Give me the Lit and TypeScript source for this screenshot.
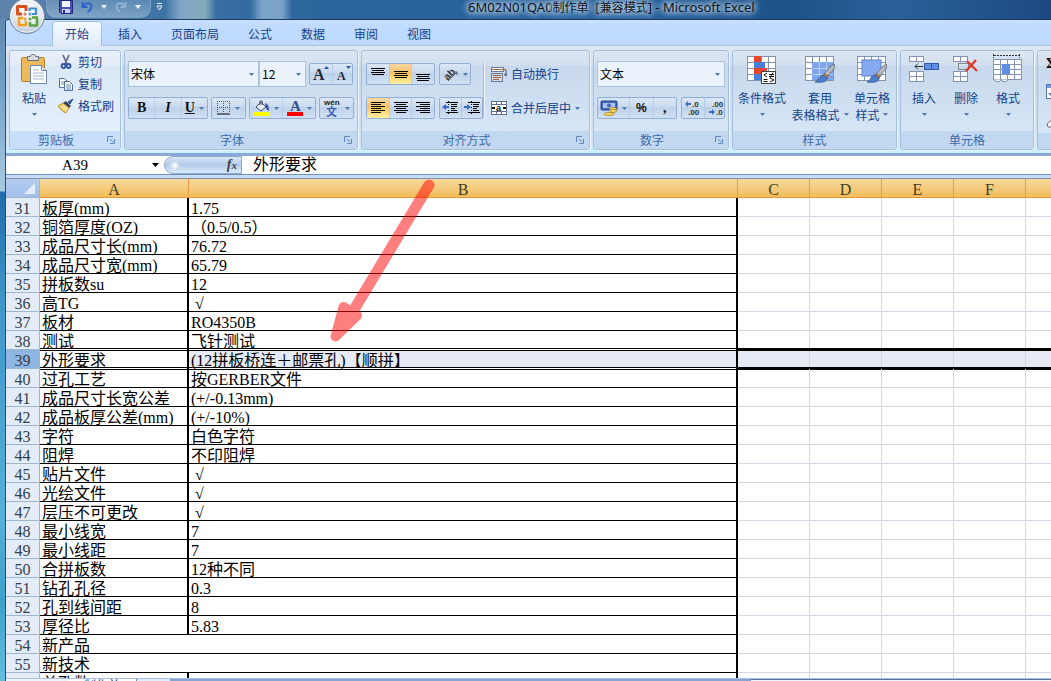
import { LitElement, html, svg, css, nothing, TemplateResult } from "lit";
import { customElement, property } from "lit/decorators.js";
import { classMap } from "lit/directives/class-map.js";

/* ---------- icons ---------- */

const icon = (w: number, h: number, body: unknown) =>
  html`<svg width=${w} height=${h} viewBox="0 0 ${w} ${h}" aria-hidden="true">${body}</svg>`;

const caret = html`<svg class="caret" width="5" height="3" viewBox="0 0 5 3" aria-hidden="true"><path d="M0 0h5L2.5 3z" fill="#4f78ad" /></svg>`;

const lines = (rows: number[][]) => svg`${rows.map(
  ([x, y, w]) => svg`<rect x=${x} y=${y} width=${w} height="1" fill="#000"/>`
)}`;

const cells = (x: number, y: number, cols: number, rows: number, cw: number, ch: number) => {
  const out: unknown[] = [];
  for (let r = 0; r < rows; r++)
    for (let c = 0; c < cols; c++)
      out.push(svg`<rect x=${x + c * cw + 0.5} y=${y + r * ch + 0.5} width=${cw} height=${ch} fill="#fff" stroke="#8494b0" stroke-width="1"/>`);
  return svg`${out}`;
};

const brush = (x: number, y: number) => svg`<g transform="translate(${x} ${y})">
  <path d="M19 0l1 1-1 4-6 7-4-2 6-7z" fill="#b5b9c2" stroke="#5b6272" stroke-width=".8"/>
  <path d="M9 10l4 2-1 3-4-3z" fill="#c58a3f" stroke="#7d5420" stroke-width=".6"/>
  <path d="M8 11l4 3c0 4-5 5-12 4 4-1 3-6 8-7z" fill="#4c7fcb" stroke="#2a4f8e" stroke-width=".7"/>
</g>`;

const I = {
  office: icon(36, 36, svg`
    <defs>
      <radialGradient id="orb" cx=".5" cy=".35" r=".7"><stop offset="0" stop-color="#fff"/><stop offset=".6" stop-color="#e3e8ef"/><stop offset="1" stop-color="#a9b7cb"/></radialGradient>
    </defs>
    <circle cx="18" cy="18" r="17.5" fill="url(#orb)" stroke="#6f86a6"/>
    <circle cx="18" cy="18" r="16.2" fill="none" stroke="#fff" stroke-opacity=".8"/>
    <g fill="none" stroke-linejoin="round">
      <path d="M13 16H8.500V8.500H17V13" stroke="#d9501e" stroke-width="3"/>
      <path d="M20.500 13v-2.500h6.500V16H23" stroke="#3f8ed0" stroke-width="2.200"/>
      <path d="M14 20h-4v7h7V23" stroke="#f0a11c" stroke-width="2.600"/>
      <path d="M23 19.500h5v8h-7V24" stroke="#5aa63c" stroke-width="2.600"/>
      <path d="M15 15h2v2h-2z" stroke="#b9541e" stroke-width=".8"/>
      <path d="M20 15h2v2h-2z" stroke="#2d76b8" stroke-width=".8"/>
      <path d="M15 20h2v2h-2z" stroke="#cf8410" stroke-width=".8"/>
      <path d="M20 20h2v2h-2z" stroke="#43892a" stroke-width=".8"/>
    </g>`),
  save: icon(14, 14, svg`
    <path d="M.5.5h13v13H2L.500 12z" fill="#4a4fb4" stroke="#23277a"/>
    <rect x="3" y="1" width="8" height="6" fill="#eef2fb"/><rect x="3" y="9" width="8" height="4" fill="#c8cfe6"/><rect x="4" y="10" width="2" height="3" fill="#23277a"/>`),
  undo: icon(12, 12, svg`<path d="M1.500 1v5h5M2 5.500C4 1 10.500 1 10.500 5.500c0 2-1.500 4-4 5.500" fill="none" stroke="#2f63c8" stroke-width="2"/>`),
  redo: icon(12, 12, svg`<path d="M10.500 1v5h-5M10 5.500C8 1 1.500 1 1.500 5.500c0 2 1.500 4 4 5.500" fill="none" stroke="#8fb2d2" stroke-width="2"/>`),
  lightCaret: icon(6, 4, svg`<path d="M0 0h6L3 4z" fill="#e8f1fa"/>`),
  customize: icon(7, 8, svg`<path d="M1 .5h5M1 3h5L3.500 7z" fill="none" stroke="#e8f1fa"/>`),
  paste: icon(28, 30, svg`
    <rect x="1.500" y="3.500" width="23" height="24" rx="1" fill="#eeb95a" stroke="#b27f2b"/>
    <path d="M7.500 2.500h3c0-3 5-3 5 0h3v4h-11z" fill="#d9dde3" stroke="#6b7078"/>
    <path d="M10.500 11.500h11l5 5v13h-16z" fill="#fff" stroke="#6f86ae"/>
    <path d="M21.500 11.500v5h5" fill="#dbe6f6" stroke="#6f86ae"/>
    <path d="M13 16h6M13 19h11M13 22h11M13 25h11" stroke="#9fb4d4"/>`),
  cut: icon(16, 16, svg`
    <path d="M5 1l4 9M11 1L7 10" stroke="#66707f" stroke-width="1.800"/>
    <circle cx="5.500" cy="12" r="2" fill="none" stroke="#2f56a5" stroke-width="1.800"/>
    <circle cx="10.500" cy="12" r="2" fill="none" stroke="#2f56a5" stroke-width="1.800"/>`),
  copy: icon(16, 16, svg`
    <path d="M1.500 2.500h5l3 3v6h-8z" fill="#fff" stroke="#51709f"/><path d="M3 6h4M3 8h4" stroke="#7b95bf"/>
    <path d="M6.500 5.500h5l3 3v6h-8z" fill="#fff" stroke="#51709f"/><path d="M8 9h5M8 11h5M8 13h5" stroke="#5f82bb"/>`),
  painter: icon(16, 16, svg`
    <path d="M15 1l-3 5-2-2z" fill="#2f56a5" stroke="#2f56a5"/>
    <path d="M8 3l5 5-2 2-6-5z" fill="#3a3f55"/>
    <path d="M5 5l6 5-3 5c-3-1-5-3-8-7z" fill="#f2cf6b" stroke="#a8822c" stroke-width=".8"/>
    <path d="M3 8l6 5M5 7l5 4" stroke="#fff6cf"/>`),
  growFont: icon(18, 16, svg`<text x="1" y="14" font-family="Liberation Serif" font-weight="700" font-size="16" fill="#1f2a3c">A</text><path d="M12 3h5l-2.500-3z" fill="#2f56a5"/>`),
  shrinkFont: icon(18, 16, svg`<text x="2" y="14" font-family="Liberation Serif" font-weight="700" font-size="12" fill="#1f2a3c">A</text><path d="M11 0h5l-2.500 3z" fill="#2f56a5"/>`),
  border: icon(14, 14, svg`<path d="M.5 0v12M6.500 0v12M12.500 0v12M0 .5h13M0 6.500h13" stroke="#555" stroke-dasharray="1 1"/><path d="M0 13h13" stroke="#000"/>`),
  fill: icon(16, 16, svg`
    <path d="M2 7l5-5 5 5-5 4z" fill="#e9eef7" stroke="#3c4a66"/><path d="M6 5V1.500c0-1 2-1 2 0V5" fill="none" stroke="#3c4a66"/>
    <path d="M11 3c3 1 4 3 4 8-2-1-3-2-3-4z" fill="#2f56a5"/><rect y="12" width="16" height="4" fill="#ff0"/>`),
  fontColor: icon(16, 16, svg`<text x="3" y="11" font-family="Liberation Serif" font-weight="700" font-size="15" fill="#36508a">A</text><rect y="12" width="16" height="4" fill="#f00"/>`),
  phonetic: icon(18, 18, svg`<text x="1" y="6" font-family="Liberation Sans" font-weight="700" font-size="8" fill="#222">wén</text><text x="3" y="17" font-family="Noto Sans CJK SC" font-size="11" font-weight="700" fill="#3d5fb5">文</text>`),
  top: icon(16, 16, lines([[1, 2, 14], [2, 4, 12], [1, 6, 14], [2, 8, 12]])),
  middle: icon(16, 16, lines([[1, 5, 14], [2, 7, 12], [1, 9, 14], [2, 11, 12]])),
  bottom: icon(16, 16, lines([[1, 8, 14], [2, 10, 12], [1, 12, 14], [2, 14, 12]])),
  left: icon(16, 16, lines([[1, 2, 14], [1, 4, 10], [1, 6, 14], [1, 8, 10], [1, 10, 14], [1, 12, 10]])),
  center: icon(16, 16, lines([[1, 2, 14], [3, 4, 10], [1, 6, 14], [3, 8, 10], [1, 10, 14], [3, 12, 10]])),
  right: icon(16, 16, lines([[1, 2, 14], [5, 4, 10], [1, 6, 14], [5, 8, 10], [1, 10, 14], [5, 12, 10]])),
  rotate: icon(16, 16, svg`<text x="1" y="12" transform="rotate(-45 6 9)" font-family="Liberation Sans" font-weight="700" font-size="10" fill="#333">ab</text><path d="M5 15l9-9M14 6h-3M14 6v3" stroke="#555" fill="none"/>`),
  outdent: icon(16, 16, svg`${lines([[4, 2, 12], [9, 4, 6], [9, 6, 6], [9, 8, 4], [9, 10, 6], [4, 12, 12]])}<path d="M6.500 1v14" stroke="#000" stroke-dasharray="1 2"/><path d="M0 7l4-3v2h3v2H4v2z" fill="#3c6cc4"/>`),
  indent: icon(16, 16, svg`${lines([[4, 2, 12], [9, 4, 6], [9, 6, 6], [9, 8, 4], [9, 10, 6], [4, 12, 12]])}<path d="M7.500 1v14" stroke="#000" stroke-dasharray="1 2"/><path d="M7 7L3 4v2H0v2h3v2z" fill="#3c6cc4"/>`),
  wrap: icon(16, 16, svg`<rect x=".5" y="1.500" width="12" height="4" fill="#fff" stroke="#6c7a93"/><path d="M1 3.500h14M2 9.500h8M2 11.500h8M2 13.500h6" stroke="#a4653a"/><rect x=".5" y="7.500" width="11" height="8" fill="none" stroke="#6c7a93"/><path d="M15 4v6l-2-2M15 10l1-2" stroke="#3a4c77" fill="none"/>`),
  merge: icon(16, 16, svg`<rect x=".5" y="1.500" width="15" height="13" fill="#fff" stroke="#5f6f8c"/><path d="M0 4.500h16M0 11.500h16M5.500 1v3M10.500 1v3M5.500 12v3M10.500 12v3" stroke="#5f6f8c"/><text x="5" y="11" font-family="Liberation Sans" font-weight="700" font-size="9" fill="#111">a</text><path d="M1 8h3M12 8h3" stroke="#111" stroke-width="2"/>`),
  currency: icon(18, 16, svg`<rect x="1" y="1" width="16" height="9" rx="1" fill="#3f69b8" stroke="#27478a"/><rect x="3" y="3" width="12" height="5" fill="#a9c3ee"/><circle cx="9" cy="5.500" r="2" fill="#3f69b8"/><ellipse cx="13" cy="9" rx="3.500" ry="1.500" fill="#f6d869" stroke="#a37a18" stroke-width=".7"/><ellipse cx="13" cy="11" rx="3.500" ry="1.500" fill="#f6d869" stroke="#a37a18" stroke-width=".7"/><ellipse cx="9" cy="14" rx="5" ry="1.500" fill="#f6d869" stroke="#a37a18" stroke-width=".7"/>`),
  moreDec: icon(18, 16, svg`<g font-family="Liberation Sans" font-weight="700" font-size="8" fill="#333"><text x="8" y="7">.0</text><text x="4" y="15">.00</text></g><path d="M1 4l3-3v2h3v2H4v2z" fill="#3c6cc4"/>`),
  lessDec: icon(18, 16, svg`<g font-family="Liberation Sans" font-weight="700" font-size="8" fill="#333"><text x="5" y="7">.00</text><text x="9" y="15">.0</text></g><path d="M8 12L5 9v2H2v2h3v2z" fill="#3c6cc4"/>`),
  conditional: icon(30, 30, svg`${cells(0, 2, 4, 4, 7, 6)}
    <rect x="7" y="2" width="7" height="6" fill="#e8452f"/><rect x="7" y="8" width="11" height="6" fill="#4a7fd8"/><rect x="7" y="14" width="13" height="6" fill="#e8452f"/><rect x="7" y="20" width="8" height="6" fill="#4a7fd8"/>
    <rect x="14.500" y="17.500" width="14" height="12" fill="#fff" stroke="#444"/><path d="M20 19l-3 2 3 2M16.500 25.500h4M16.500 27.500h4M22 20.500h5M22 22.500h5M26 18.500l-3 5.500M23 24l4 2-4 2" stroke="#111" fill="none"/>`),
  tableFormat: icon(30, 30, svg`${cells(0, 2, 4, 4, 7, 6)}<rect x="7" y="8" width="21" height="18" fill="#7fa5ea"/><path d="M14.500 8v18M21.500 8v18M7 14.500h21M7 20.500h21" stroke="#b8cff6"/>${brush(10, 10)}`),
  cellStyle: icon(30, 30, svg`${cells(0, 2, 4, 4, 7, 6)}<rect x="5" y="6" width="19" height="16" fill="#86aaf0" stroke="#5d83cc"/>${brush(10, 10)}`),
  insert: icon(30, 28, svg`${cells(0, 2, 2, 1, 7, 5)}${cells(0, 17, 2, 2, 7, 5)}<rect x="15.500" y="9.500" width="14" height="6" fill="#5f8fe2" stroke="#2f58a8"/><path d="M22.500 9v7" stroke="#2f58a8"/><path d="M6 12.500h8M9 9.500l-3 3 3 3" stroke="#333" fill="none"/>`),
  remove: icon(26, 28, svg`${cells(0, 2, 2, 1, 7, 5)}${cells(0, 17, 2, 2, 7, 5)}<rect x="5.500" y="9.500" width="10" height="6" fill="none" stroke="#333" stroke-dasharray="1 1"/><path d="M14 7l10 10M23 6L13 17" stroke="#e0341f" stroke-width="2.200"/>`),
  format: icon(30, 28, svg`<path d="M.5 0v4M26.500 0v4M1 1.500h25" stroke="#333" stroke-dasharray="2 1"/>${cells(0, 5, 4, 4, 7, 5)}<rect x="9" y="10" width="8" height="10" fill="#5f8fe2"/><path d="M1 25.500c2 3 6 3 7 0 2 3 6 3 7 0" fill="#fff" stroke="#6c7fa0"/>`),
  sum: icon(14, 14, svg`<text x="0" y="13" font-family="Liberation Serif" font-weight="700" font-size="15" fill="#111">Σ</text>`),
  fillDown: icon(16, 16, svg`<rect x=".5" y=".5" width="14" height="14" fill="#fff" stroke="#5378b4"/><rect x="1" y="1" width="13" height="3" fill="#6f9ae0"/><path d="M5 6h4v3h3l-5 5-5-5h3z" fill="#3f7adb"/>`),
  erase: icon(18, 12, svg`<path d="M1 8l8-7h8v4l-8 6H2z" fill="#fff" stroke="#667"/>`),
  launcher: icon(8, 8, svg`<path d="M.5 6V.5H6" fill="none" stroke="#5f86bd"/><path d="M3 3l3 3M7.500 3v4.500H3" fill="none" stroke="#5f86bd"/>`),
};

/* ---------- ribbon group ---------- */

@customElement("ribbon-group")
export class RibbonGroup extends LitElement {
  @property() label = "";
  @property({ type: Boolean }) launcher = false;

  static styles = css`
    :host {
      display: flex;
      flex-direction: column;
      flex: none;
      box-sizing: border-box;
      height: 100px;
      border: 1px solid #a5bfdf;
      border-radius: 3px;
      box-shadow: 1px 1px 0 #eef5fd;
      background: linear-gradient(#dce6f3 0, #d3e0f0 14px, #c8d9ed 15px, #d9e9f9 100%);
    }
    :host([hot]) { background: linear-gradient(#e9f0fa 0, #e2ecf8 14px, #dae7f6 15px, #e6f2fd 100%); }
    :host([hot]) .foot { background: #c8dffc; }
    .body { flex: 1; display: flex; }
    .foot {
      display: flex;
      align-items: center;
      height: 18px;
      background: #c1d8f0;
      color: #3e6aaa;
    }
    .name { flex: 1; text-align: center; line-height: 18px; }
    button { border: 0; background: none; padding: 0; width: 18px; height: 12px; display: grid; place-items: center; }
    svg { display: block; }
  `;

  render() {
    return html`<div class="body"><slot></slot></div>
      <div class="foot">
        <span class="name">${this.label}</span>
        ${this.launcher ? html`<button aria-label="${this.label}选项">${I.launcher}</button>` : nothing}
      </div>`;
  }
}

/* ---------- data ---------- */

type Row = [number, string, string?];

const ROWS: Row[] = [
  [31, "板厚(mm)", "1.75"],
  [32, "铜箔厚度(OZ)", "（0.5/0.5）"],
  [33, "成品尺寸长(mm)", "76.72"],
  [34, "成品尺寸宽(mm)", "65.79"],
  [35, "拼板数su", "12"],
  [36, "高TG", "√"],
  [37, "板材", "RO4350B"],
  [38, "测试", "飞针测试"],
  [39, "外形要求", "(12拼板桥连＋邮票孔)【顺拼】"],
  [40, "过孔工艺", "按GERBER文件"],
  [41, "成品尺寸长宽公差", "(+/-0.13mm)"],
  [42, "成品板厚公差(mm)", "(+/-10%)"],
  [43, "字符", "白色字符"],
  [44, "阻焊", "不印阻焊"],
  [45, "贴片文件", "√"],
  [46, "光绘文件", "√"],
  [47, "层压不可更改", "√"],
  [48, "最小线宽", "7"],
  [49, "最小线距", "7"],
  [50, "合拼板数", "12种不同"],
  [51, "钻孔孔径", "0.3"],
  [52, "孔到线间距", "8"],
  [53, "厚径比", "5.83"],
  [54, "新产品"],
  [55, "新技术"],
  [56, "单孔数", ""],
];

const TABS = ["开始", "插入", "页面布局", "公式", "数据", "审阅", "视图"];
const EMPTY = ["C", "D", "E", "F", ""];
const SELECTED = 39;

/* ---------- application ---------- */

@customElement("app-root")
export class AppRoot extends LitElement {
  static styles = css`
    *, *::before, *::after { box-sizing: border-box; }
    :host {
      display: flex;
      flex-direction: column;
      position: relative;
      height: 100vh;
      overflow: hidden;
      padding-left: 5px;
      font: 12px/16px "Noto Sans CJK SC", sans-serif;
      color: #15428b;
      background: linear-gradient(#5d84ab 0, #6f9cc4 80px, #a9c9e2 191px, #1f6ca9 192px, #3f97c9 300px, #55b0da 520px, #3f9fcb 600px, #62bfdd 100%);
    }
    button, select, input { font: inherit; color: inherit; margin: 0; padding: 0; border: 0; background: none; border-radius: 0; }
    svg { display: block; flex: none; }

    .titlebar {
      display: grid;
      grid-template-columns: 1.6fr auto 1fr;
      margin-left: -5px;
      height: 19px;
      background:
        linear-gradient(90deg, transparent 165px, #a4bfd6aa 180px, #a9cbc8aa 205px, transparent 216px),
        linear-gradient(90deg, transparent 250px, #9fc0ddaa 262px, #9fc0ddaa 282px, transparent 292px),
        linear-gradient(90deg, #5d84ab 0, #3f74a6 150px, #2c659c 320px, #27609a 60%, #1d5189 75%, #2a609a 85%, #1b4a80 100%);
    }
    .quick { display: flex; align-items: center; height: 14px; padding-left: 46px; }
    .pill {
      display: flex; align-items: center; gap: 8px; height: 18px; padding: 0 9px 4px 12px; margin-top: 4px;
      background: linear-gradient(#a9c6e040, #c3d9ec70); border: 1px solid #8fb0cf80; border-top: 0; border-radius: 0 0 10px 10px;
    }
    .quick button { display: block; }
    .quick .custom { margin-left: 5px; }
    .title {
      display: flex;
      padding: 0 10px;
      font: 13px/14px "Noto Sans", sans-serif;
      color: #0c1420;
      text-shadow: 0 0 6px #dcebfa, 0 0 6px #dcebfa, 0 0 10px #b9d3ec;
      white-space: pre;
    }
    .title .zh { font: 12px/14px "Noto Sans CJK SC", sans-serif; }
    .office { position: absolute; left: 9px; top: -2px; z-index: 2; width: 36px; height: 36px; }

    .window { flex: 1; min-height: 0; display: flex; flex-direction: column; border-left: 1px solid #2b4d77; border-top: 1px solid #1d3a5f; border-top-left-radius: 4px; background: #bfdbff; overflow: hidden; }
    .tabs { display: flex; gap: 5px; height: 26px; padding: 2px 0 0 47px; background: linear-gradient(#c9e0ff, #bfdbff 6px); border-bottom: 1px solid #a3c3ec; flex: none; }
    .tab { padding: 0 12px; height: 24px; line-height: 24px; }
    .tab.on { background: linear-gradient(#f4f9ff, #e0ebf8); border-radius: 3px 3px 0 0; box-shadow: 0 0 0 1px #9cc0ee; }

    .ribbon {
      display: flex; gap: 3px; flex: none;
      height: 110px; padding: 4px 0 0 3px;
      background: linear-gradient(#dfe9f5 0, #cfddef 20px, #c6d8ee 21px, #d6e6f6 98px, #c6f0fb 103px);
      border-bottom: 3px solid #8ba9d4;
    }
    .clip { width: 112px; }
    .font { width: 234px; }
    .align { width: 229px; }
    .number { width: 136px; }
    .styles { width: 165px; }
    .cellgrp { width: 134px; }
    .edit { width: 160px; }

    .stack { display: flex; flex-direction: column; gap: 10px; padding: 10px 3px 0; flex: 1; }
    .stack.flush { padding: 10px 0 0; }
    .stack.after { padding: 10px 0 0 6px; }
    .bar { display: flex; align-items: center; gap: 4px; height: 26px; }
    .font .bar { gap: 3px; }
    .bar.low { height: 22px; }
    .tools { display: flex; height: 22px; border: 1px solid #93afd4; border-radius: 2px; background: linear-gradient(#dbe7f5, #c9daee 45%, #bdd1ea 46%, #d0e1f4); }
    .tools button { display: flex; align-items: center; justify-content: center; gap: 4px; flex: 1; padding: 0 2px; color: #111; }
    .tools button + button { border-left: 1px solid #b5cae4; }
    .tools .on { background: linear-gradient(#fbd9a0, #f9bf68 45%, #fbc65f 46%, #fff0a0); }
    .w31 { width: 32px; } .w35 { width: 35px; } .w44 { width: 44px; } .w67 { width: 67px; } .w69 { width: 69px; } .w80 { width: 80px; }
    .glyph { font: bold 14px/18px "Liberation Serif", serif; }
    .glyph.i { font-style: italic; }
    .glyph.u { text-decoration: underline; }
    .pct { font: bold 12px/18px "Liberation Sans", sans-serif; }

    .combo { display: flex; align-items: center; height: 26px; background: #eaf2fb; border: 1px solid #abc1de; position: relative; flex: none; }
    .combo select { appearance: none; width: 100%; height: 24px; padding-left: 2px; color: #000; }
    .combo .caret { position: absolute; right: 4px; pointer-events: none; }
    .face { width: 131px; margin-right: -3px; } .size { width: 47px; } .numfmt { width: 128px; }

    .big { display: flex; flex-direction: column; align-items: center; padding-top: 3px; line-height: 17px; white-space: nowrap; }
    .big .pic { height: 35px; display: flex; }
    .big .two { display: flex; align-items: center; gap: 4px; }
    .big .drop { height: 17px; display: flex; align-items: center; }
    .paste { width: 48px; }
    .small { display: flex; flex-direction: column; }
    .small button, .wide { display: flex; align-items: center; gap: 4px; height: 22px; white-space: nowrap; }
    .rule { width: 2px; height: 56px; margin-top: 11px; border-left: 1px solid #a3bddf; border-right: 1px solid #eef5fd; }
    .spread { display: flex; flex: 1; padding: 0 3px 0 4px; justify-content: space-between; }
    .styles .spread { padding: 0 6px 0 5px; }
    .cellgrp .spread { padding: 0 10px 0 8px; }
    .edit .small { gap: 8px; padding: 0 8px; }

    .formula { display: flex; flex: none; height: 19px; background: #fff; border-bottom: 1px solid #6f8fbb; }
    .namebox { display: flex; align-items: center; width: 158px; padding-right: 5px; }
    .formula input { font: 16px/18px "Liberation Serif", "Noto Sans CJK SC", serif; color: #000; height: 18px; }
    .namebox input { width: 100%; min-width: 0; text-align: center; padding-right: 8px; font-size: 15px; }
    .fx { display: flex; align-items: center; justify-content: space-between; width: 78px; padding: 0 4px; border-radius: 10px 0 0 10px; border: 1px solid #8ba9d2; background: linear-gradient(#d9e7f8, #b4cbea 50%, #dcebfb); }
    .knob { width: 10px; height: 10px; border-radius: 50%; background: radial-gradient(circle at 60% 60%, #fff, #a7bcda); }
    .fx button { font: italic bold 14px/16px "Liberation Serif", serif; color: #40444c; }
    .fx small { font-size: 11px; }
    .formula .entry { flex: 1; min-width: 0; padding-left: 11px; }

    .grid { flex: 1; min-height: 0; border-top: 3px solid #c9dcf5; overflow: hidden; background: #fff; position: relative; }
    table { width: 100%; table-layout: fixed; border-collapse: separate; border-spacing: 0; font: 16px/14px "Liberation Serif", "Noto Sans CJK SC", serif; color: #000; }
    .c-head { width: 34px; } .c-a { width: 149px; } .c-b { width: 549px; } .c-n { width: 72px; }
    th { font-weight: 400; padding: 0; }
    thead th { height: 20px; padding-top: 4px; background: linear-gradient(#f9d99f, #f1be5c); border-top: 1px solid #7f93b0; border-right: 1px solid #e99a4c; border-bottom: 1px solid #ef9430; color: #3f3f20; }
    thead th.corner { padding-top: 0; background: linear-gradient(#b3cdf0, #a3bfe8); border-right-color: #9eb6ce; border-bottom-color: #9eb6ce; }
    thead th.corner svg { margin-left: auto; margin-right: 4px; }
    thead th:last-child { border-right: 0; }
    tbody th { background: #e4ecf7; color: #333f4d; border-right: 1px solid #9eb6ce; border-bottom: 1px solid #9eb6ce; padding-top: 4px; }
    td { height: 19px; padding: 4px 0 0 2px; white-space: nowrap; border-bottom: 1px solid #d0d7e5; border-right: 1px solid #d0d7e5; position: relative; }
    td.data { border-bottom-color: #000; }
    td.thick { border-right: 2px solid #000; }
    td:last-child { border-right: 0; }
    td.tick { padding-left: 6px; }
    .sel th { background: #8fb5e2; }
    .sel td { background: #e6eaf4; z-index: 0; }
    .sel td:first-of-type { background: #fff; }
    .sel td::before, .sel td::after { content: ""; position: absolute; left: 0; right: -2px; height: 3px; background: #000; z-index: -1; }
    .sel td.data::before, .sel td.data::after { background: #fff; border: solid #000; border-width: 1px 0; right: 0; }
    .sel td::before { top: -2px; }
    .sel td::after { bottom: -2px; }
    .arrow { position: absolute; left: 314px; top: 0; }

    .sheets { display: flex; flex: none; height: 3px; overflow: hidden; background: #84a3d1; border-top: 1px solid #a9c1e4; }
    .nav { width: 62px; background: #eef4fc; }
    .sheet { width: 68px; line-height: 12px; background: #fff; text-align: center; }
    .new { width: 34px; background: #e4eefb; border-radius: 4px 0 0 0; border-left: 1px solid #6182b5; }
    .hscroll { margin-left: auto; width: 300px; background: #eef4fc; border-top: 1px solid #56749f; }
  `;

  private big(pic: TemplateResult, first: string, second?: string, cls = "") {
    return html`<button class="big ${cls}">
      <span class="pic">${pic}</span><span>${first}</span>
      ${second ? html`<span class="two">${second}${caret}</span>` : html`<span class="drop">${caret}</span>`}
    </button>`;
  }

  private tool(content: unknown, label: string, opts: { drop?: boolean; on?: boolean } = {}) {
    return html`<button aria-label=${label} class=${classMap({ on: !!opts.on })}>${content}${opts.drop ? caret : nothing}</button>`;
  }

  private combo(cls: string, label: string, value: string) {
    return html`<div class="combo ${cls}"><select aria-label=${label}><option>${value}</option></select>${caret}</div>`;
  }

  private row([n, a, b]: Row) {
    const merged = b === undefined;
    return html`<tr class=${classMap({ sel: n === SELECTED })}>
      <th scope="row">${n}</th>
      ${merged
        ? html`<td class="data thick" colspan="2">${a}</td>`
        : html`<td class="data thick">${a}</td><td class=${classMap({ data: true, thick: true, tick: b === "√" })}>${b}</td>`}
      ${EMPTY.map(() => html`<td></td>`)}
    </tr>`;
  }

  render() {
    return html`
      <header class="titlebar">
        <div class="quick">
          <div class="pill">
            <button aria-label="保存">${I.save}</button>
            <button aria-label="撤消">${I.undo}</button>
            <button aria-label="撤消列表">${I.lightCaret}</button>
            <button aria-label="恢复">${I.redo}</button>
            <button aria-label="恢复列表">${I.lightCaret}</button>
          </div>
          <button class="custom" aria-label="自定义">${I.customize}</button>
        </div>
        <div class="title">6M02N01QA0<span class="zh">制作单</span>  [<span class="zh">兼容模式</span>] - Microsoft Excel</div>
      </header>
      <button class="office" aria-label="Office">${I.office}</button>

      <main class="window">
        <nav class="tabs">
          ${TABS.map((t, i) => html`<button class=${classMap({ tab: true, on: i === 0 })}>${t}</button>`)}
        </nav>

        <section class="ribbon">
          <ribbon-group class="clip" label="剪贴板" launcher hot>
            ${this.big(I.paste, "粘贴", undefined, "paste")}
            <div class="small">
              <button>${I.cut}剪切</button>
              <button>${I.copy}复制</button>
              <button>${I.painter}格式刷</button>
            </div>
          </ribbon-group>

          <ribbon-group class="font" label="字体" launcher>
            <div class="stack">
              <div class="bar">
                ${this.combo("face", "字体", "宋体")}
                ${this.combo("size", "字号", "12")}
                <div class="tools w44">${this.tool(I.growFont, "增大字号")}${this.tool(I.shrinkFont, "减小字号")}</div>
              </div>
              <div class="bar low">
                <div class="tools w80">
                  ${this.tool(html`<span class="glyph">B</span>`, "加粗")}
                  ${this.tool(html`<span class="glyph i">I</span>`, "倾斜")}
                  ${this.tool(html`<span class="glyph u">U</span>`, "下划线", { drop: true })}
                </div>
                <div class="tools w35">${this.tool(I.border, "边框", { drop: true })}</div>
                <div class="tools w67">${this.tool(I.fill, "填充颜色", { drop: true })}${this.tool(I.fontColor, "字体颜色", { drop: true })}</div>
                <div class="tools w35">${this.tool(I.phonetic, "拼音", { drop: true })}</div>
              </div>
            </div>
          </ribbon-group>

          <ribbon-group class="align" label="对齐方式" launcher>
            <div class="spread">
              <div class="stack flush">
                <div class="bar">
                  <div class="tools w69">${this.tool(I.top, "顶端对齐")}${this.tool(I.middle, "垂直居中", { on: true })}${this.tool(I.bottom, "底端对齐")}</div>
                  <div class="tools w31">${this.tool(I.rotate, "方向", { drop: true })}</div>
                </div>
                <div class="bar low">
                  <div class="tools w69">${this.tool(I.left, "左对齐", { on: true })}${this.tool(I.center, "居中")}${this.tool(I.right, "右对齐")}</div>
                  <div class="tools w44">${this.tool(I.outdent, "减少缩进")}${this.tool(I.indent, "增加缩进")}</div>
                </div>
              </div>
              <div class="rule"></div>
              <div class="stack after">
                <div class="bar"><button class="wide">${I.wrap}自动换行</button></div>
                <div class="bar low"><button class="wide">${I.merge}合并后居中${caret}</button></div>
              </div>
            </div>
          </ribbon-group>

          <ribbon-group class="number" label="数字" launcher>
            <div class="stack">
              <div class="bar">${this.combo("numfmt", "数字格式", "文本")}</div>
              <div class="bar low">
                <div class="tools w80">
                  ${this.tool(I.currency, "会计数字格式", { drop: true })}
                  ${this.tool(html`<span class="pct">%</span>`, "百分比")}
                  ${this.tool(html`<span class="glyph">,</span>`, "千位分隔")}
                </div>
                <div class="tools w44">${this.tool(I.moreDec, "增加小数位数")}${this.tool(I.lessDec, "减少小数位数")}</div>
              </div>
            </div>
          </ribbon-group>

          <ribbon-group class="styles" label="样式">
            <div class="spread">
              ${this.big(I.conditional, "条件格式")}
              ${this.big(I.tableFormat, "套用", "表格格式")}
              ${this.big(I.cellStyle, "单元格", "样式")}
            </div>
          </ribbon-group>

          <ribbon-group class="cellgrp" label="单元格">
            <div class="spread">
              ${this.big(I.insert, "插入")}
              ${this.big(I.remove, "删除")}
              ${this.big(I.format, "格式")}
            </div>
          </ribbon-group>

          <ribbon-group class="edit" label="">
            <div class="small">
              <button aria-label="自动求和">${I.sum}</button>
              <button aria-label="填充">${I.fillDown}</button>
              <button aria-label="清除">${I.erase}</button>
            </div>
          </ribbon-group>
        </section>

        <section class="formula">
          <div class="namebox">
            <input aria-label="名称框" value="A39" />
            ${icon(7, 4, svg`<path d="M0 0h7L3.500 4z" fill="#000"/>`)}
          </div>
          <div class="fx"><span class="knob"></span><button aria-label="插入函数">f<small>x</small></button></div>
          <input class="entry" aria-label="编辑栏" value="外形要求" />
        </section>

        <section class="grid">
          <table>
            <colgroup>
              <col class="c-head" /><col class="c-a" /><col class="c-b" />
              <col class="c-n" /><col class="c-n" /><col class="c-n" /><col class="c-n" /><col />
            </colgroup>
            <thead>
              <tr>
                <th class="corner">${icon(11, 11, svg`<path d="M11 0v11H0z" fill="#e3edf9"/>`)}</th>
                <th>A</th><th>B</th>${EMPTY.map((c) => html`<th>${c}</th>`)}
              </tr>
            </thead>
            <tbody>${ROWS.map((r) => this.row(r))}</tbody>
          </table>
          <svg class="arrow" width="130" height="170" viewBox="0 0 130 170" aria-hidden="true">
            <g opacity=".5" fill="#f00" stroke="#f00" stroke-linecap="round" stroke-linejoin="round">
              <path d="M109 7L35 130" stroke-width="11" />
              <path d="M23.500 129L37 137.500L15.500 158.500z" stroke-width="10" />
            </g>
          </svg>
        </section>

        <footer class="sheets">
          <div class="nav"></div><div class="sheet">制作单</div><div class="new"></div><div class="hscroll"></div>
        </footer>
      </main>
    `;
  }
}
